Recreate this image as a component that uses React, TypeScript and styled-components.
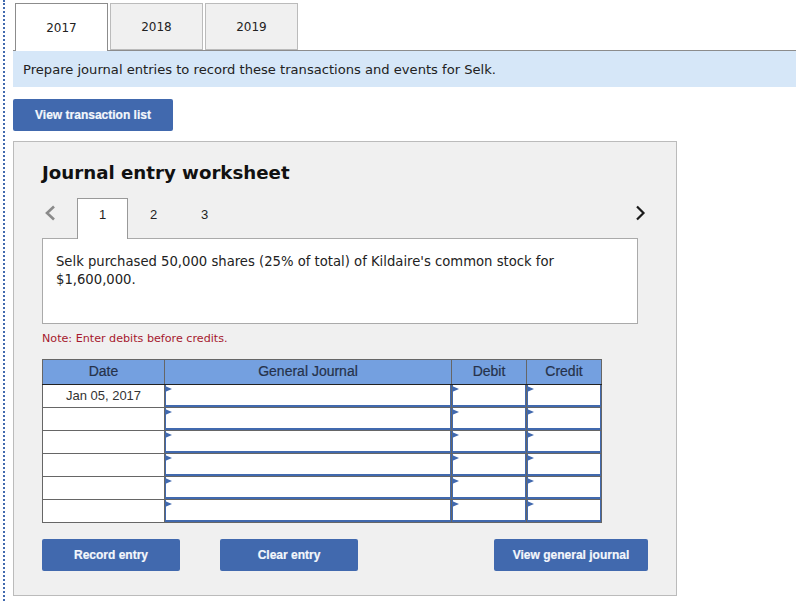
import React from "react";
import styled, { createGlobalStyle } from "styled-components";

const Global = createGlobalStyle`
  html, body { margin: 0; padding: 0; background: #fff; }
  body { font-family: "DejaVu Sans", Verdana, sans-serif; color: #222; }
  * { box-sizing: border-box; }
`;

const Page = styled.div`
  margin-left: 3px;
  height: 601px;
  width: 793px;
  border-left: 2px dotted #4169ae;
  padding: 3px 0 0 8px;
  overflow: hidden;
`;

const YearTabs = styled.div`
  display: flex;
  gap: 2px;
  padding-left: 2px;
  height: 48px;
  border-bottom: 1px solid #8c8c8c;
`;

const YearTab = styled.div<{ $active?: boolean }>`
  width: 93px;
  height: ${(p) => (p.$active ? "48px" : "47px")};
  display: flex;
  align-items: center;
  justify-content: center;
  font-size: 12px;
  color: #222;
  background: ${(p) => (p.$active ? "#fff" : "#f0f0f0")};
  border: 1px solid ${(p) => (p.$active ? "#8c8c8c" : "#bbb")};
  border-bottom: ${(p) => (p.$active ? "none" : "1px solid #bbb")};
`;

const Instruction = styled.div`
  height: 36px;
  background: #d6e7f8;
  padding-left: 10px;
  display: flex;
  align-items: center;
  font-size: 13.1px;
  color: #222;
`;

const ActionButton = styled.button<{ $width: number }>`
  width: ${(p) => p.$width}px;
  height: 32px;
  padding: 0;
  border: none;
  border-radius: 2px;
  background: #4169ae;
  color: #f4f7fc;
  font-family: "Liberation Sans", Arial, sans-serif;
  font-weight: 700;
  font-size: 12px;
  -webkit-text-stroke: 0.2px #f4f7fc;
`;

const TopAction = styled.div`
  margin-top: 12px;
`;

const Worksheet = styled.section`
  margin-top: 10px;
  width: 664px;
  height: 455px;
  background: #f0f0f0;
  border: 1px solid #bbb;
  padding: 18px 38px 0 28px;
`;

const Title = styled.h2`
  margin: 0;
  height: 26px;
  line-height: 26px;
  font-size: 18.2px;
  font-weight: 700;
  color: #111;
`;

const StepRow = styled.div`
  margin: 12px -10px 0 0;
  height: 41px;
  display: flex;
  align-items: stretch;
  position: relative;
  z-index: 1;
`;

const Chevron = styled.svg`
  width: 14px;
  height: 20px;
  align-self: flex-start;
  flex: none;
  margin-top: 5px;
`;

const Steps = styled.div`
  display: flex;
  margin-left: 21px;
  flex: 1;
`;

const Step = styled.div<{ $active?: boolean }>`
  width: 51px;
  height: 41px;
  display: flex;
  align-items: center;
  justify-content: center;
  padding-bottom: 9px;
  font-family: "Liberation Sans", Arial, sans-serif;
  font-size: 13px;
  color: #222;
  background: ${(p) => (p.$active ? "#fff" : "transparent")};
  border: ${(p) => (p.$active ? "1px solid #999" : "none")};
  border-bottom: none;
`;

const Scenario = styled.div`
  margin-top: -1px;
  width: 596px;
  height: 86px;
  background: #fff;
  border: 1px solid #aaa;
  padding: 14px 13px 0;
  font-size: 13.2px;
  line-height: 18px;
  color: #222;
`;

const Note = styled.p`
  margin: 8px 0 0;
  height: 14px;
  line-height: 14px;
  font-size: 11.15px;
  color: #a6192e;
`;

const Table = styled.table`
  margin-top: 13px;
  width: 559px;
  height: 164px;
  margin-left: 0;
  border-collapse: collapse;
  table-layout: fixed;
  font-family: "Liberation Sans", Arial, sans-serif;
  font-size: 13px;
`;

const HeadCell = styled.th<{ $width: number }>`
  width: ${(p) => p.$width}px;
  height: 25px;
  padding: 0 0 2px;
  background: #74a0e0;
  color: #26324a;
  font-weight: 400;
  font-size: 14px;
  -webkit-text-stroke: 0.2px #26324a;
  border: 1px solid #666;
  border-bottom: 1px solid #222;
  border-left-color: #222;
  &:first-child { border-left-color: #666; }
`;

const DateCell = styled.td`
  height: 23px;
  padding: 0 0 1px;
  background: #fff;
  color: #333;
  text-align: center;
  vertical-align: middle;
  border: 1px solid #666;
`;

const InputCell = styled.td`
  height: 23px;
  padding: 0;
  background: #fff;
  border: 1px solid #666;
`;

const Field = styled.div`
  position: relative;
  height: 22px;
  background: #fff;
  border-left: 1px solid #4169ae;
  border-right: 1px solid #4169ae;
  border-bottom: 2px solid #4169ae;
  &::before {
    content: "";
    position: absolute;
    left: -1px;
    top: 1px;
    border-left: 7px solid #4169ae;
    border-top: 3.5px solid transparent;
    border-bottom: 3.5px solid transparent;
  }
`;

const BottomActions = styled.div`
  margin-top: 16px;
  display: flex;
  width: 606px;
  gap: 40px;
`;

const PushedRight = styled.div`
  margin-left: auto;
`;

const columns = [122, 287, 75, 75];
const rows = ["Jan 05, 2017", "", "", "", "", ""];

export default function App() {
  return (
    <Page>
      <Global />
      <YearTabs>
        <YearTab $active>2017</YearTab>
        <YearTab>2018</YearTab>
        <YearTab>2019</YearTab>
      </YearTabs>
      <Instruction>Prepare journal entries to record these transactions and events for Selk.</Instruction>
      <TopAction>
        <ActionButton $width={160}>View transaction list</ActionButton>
      </TopAction>
      <Worksheet>
        <Title>Journal entry worksheet</Title>
        <StepRow>
          <Chevron viewBox="0 0 14 20" fill="none" stroke="#8a8a8a" strokeWidth="2.6">
            <path d="M12 3.5 L5 10 L12 16.5" />
          </Chevron>
          <Steps>
            <Step $active>1</Step>
            <Step>2</Step>
            <Step>3</Step>
          </Steps>
          <Chevron viewBox="0 0 14 20" fill="none" stroke="#1a1a1a" strokeWidth="2.2">
            <path d="M3 3.5 L9.5 10 L3 16.5" />
          </Chevron>
        </StepRow>
        <Scenario>Selk purchased 50,000 shares (25% of total) of Kildaire's common stock for $1,600,000.</Scenario>
        <Note>Note: Enter debits before credits.</Note>
        <Table>
          <thead>
            <tr>
              <HeadCell $width={columns[0]}>Date</HeadCell>
              <HeadCell $width={columns[1]}>General Journal</HeadCell>
              <HeadCell $width={columns[2]}>Debit</HeadCell>
              <HeadCell $width={columns[3]}>Credit</HeadCell>
            </tr>
          </thead>
          <tbody>
            {rows.map((date, i) => (
              <tr key={i}>
                <DateCell>{date}</DateCell>
                <InputCell><Field /></InputCell>
                <InputCell><Field /></InputCell>
                <InputCell><Field /></InputCell>
              </tr>
            ))}
          </tbody>
        </Table>
        <BottomActions>
          <ActionButton $width={138}>Record entry</ActionButton>
          <ActionButton $width={138}>Clear entry</ActionButton>
          <PushedRight>
            <ActionButton $width={154}>View general journal</ActionButton>
          </PushedRight>
        </BottomActions>
      </Worksheet>
    </Page>
  );
}
